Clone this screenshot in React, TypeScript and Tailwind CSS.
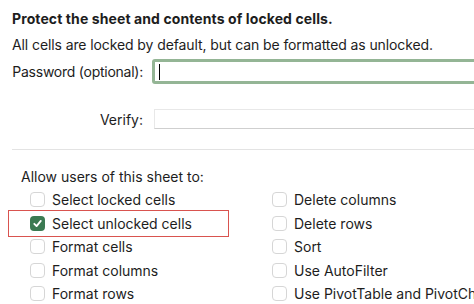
import React from 'react';

const left = ['Select locked cells', 'Select unlocked cells', 'Format cells', 'Format columns', 'Format rows'];
const right = ['Delete columns', 'Delete rows', 'Sort', 'Use AutoFilter', 'Use PivotTable and PivotChart reports'];

const Box: React.FC<{ checked?: boolean }> = ({ checked }) =>
  checked ? (
    <span className="w-[15px] h-[15px] rounded-[4px] bg-[#3b7a52] flex items-center justify-center shrink-0">
      <svg width="11" height="11" viewBox="0 0 12 12">
        <path d="M2.5 6.3 L5 8.8 L9.6 3.2" fill="none" stroke="#fff" strokeWidth="2" strokeLinecap="round" strokeLinejoin="round" />
      </svg>
    </span>
  ) : (
    <span className="w-[15px] h-[15px] rounded-[4px] border border-[#d6d6d6] bg-white shrink-0" />
  );

const Option: React.FC<{ label: string; checked?: boolean }> = ({ label, checked }) => (
  <div className="h-[23.5px] flex items-center gap-[7px] whitespace-nowrap">
    <Box checked={checked} />
    <span>{label}</span>
  </div>
);

export default function App() {
  return (
    <div className="w-[474px] h-[304px] bg-white overflow-hidden text-[14px] text-[#1d1d1d] font-['Inter',sans-serif]">
      <div className="pl-[12px] pt-[8px]">
        <div className="font-bold h-[21px] leading-[21px] tracking-[0.1px]">Protect the sheet and contents of locked cells.</div>
        <div className="mt-[5px] h-[21px] leading-[21px] tracking-[-0.1px]">All cells are locked by default, but can be formatted as unlocked.</div>

        <div className="mt-[4px] flex items-center h-[25px]">
          <span className="w-[131px] text-right whitespace-nowrap tracking-[-0.25px]">Password (optional):</span>
          <div className="ml-[9px] flex-1 h-[25px] rounded-[3px] border-[3px] border-[#94b595] bg-white flex items-center pl-[4px] -mr-[10px]">
            <span className="w-px h-[16px] bg-black" />
          </div>
        </div>

        <div className="mt-[25px] flex items-center h-[20px]">
          <span className="w-[131px] text-right">Verify:</span>
          <div className="ml-[11px] flex-1 h-[20px] border border-[#e8e8e8] border-b-[#cfcfcf] bg-white -mr-[10px]" />
        </div>

        <div className="mt-[20px] h-px bg-[#e3e3e3]" />

        <div className="mt-[16px] pl-[9px] h-[21px] leading-[21px]">Allow users of this sheet to:</div>

        <div className="flex pl-[18px] mt-[1px]">
          <div className="w-[242px] shrink-0">
            {left.map((l, i) =>
              i === 1 ? (
                <div key={l} className="relative">
                  <div className="absolute left-[-22px] top-[-2px] w-[221px] h-[27px] border border-[#d9534f] pointer-events-none" />
                  <Option label={l} checked />
                </div>
              ) : (
                <Option key={l} label={l} />
              )
            )}
          </div>
          <div>
            {right.map((r) => (
              <Option key={r} label={r} />
            ))}
          </div>
        </div>
      </div>
    </div>
  );
}
